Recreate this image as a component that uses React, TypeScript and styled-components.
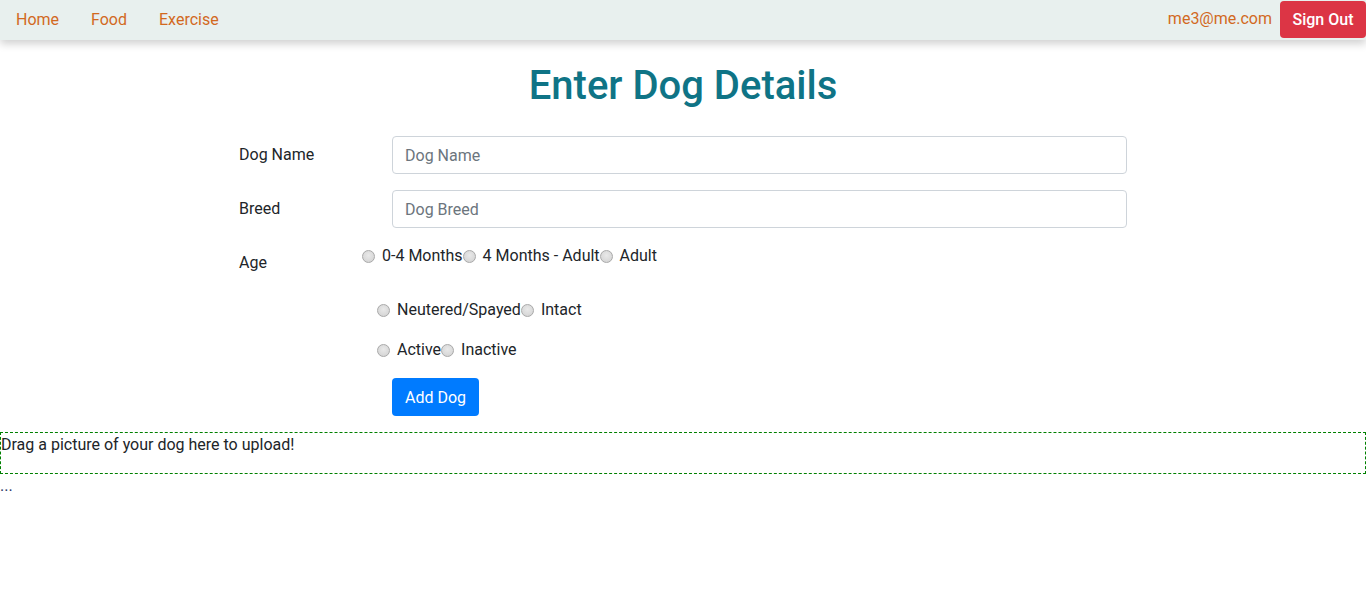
import React from "react";
import styled, { createGlobalStyle } from "styled-components";

const Global = createGlobalStyle`
  body {
    margin: 0;
    font-family: Roboto, "Liberation Sans", Arial, sans-serif;
    font-size: 16px;
    line-height: 1.5;
    color: #212529;
    background: #fff;
  }
  * { box-sizing: border-box; }
`;

const NavBar = styled.nav`
  height: 40px;
  background: #e8f0ee;
  box-shadow: 0 4px 8px rgba(0, 0, 0, 0.18);
  display: flex;
  align-items: center;
  justify-content: space-between;
  position: relative;
  z-index: 1;
`;

const NavLinks = styled.div`
  display: flex;
  align-items: center;
  padding-left: 16px;
  gap: 32px;
`;

const NavLink = styled.a`
  color: #d2691e;
  text-decoration: none;
  font-size: 16px;
`;

const NavRight = styled.div`
  display: flex;
  align-items: center;
  gap: 8px;
`;

const Email = styled.span`
  color: #d2691e;
  font-size: 16px;
  margin-top: -2px;
`;

const SignOut = styled.button`
  background: #dc3545;
  color: #fff;
  border: none;
  border-radius: 4px;
  height: 37px;
  width: 86px;
  font-family: inherit;
  font-size: 16px;
  font-weight: 500;
  margin-top: -1px;
  padding: 0;
`;

const Title = styled.h1`
  margin: 22px 0 26px;
  text-align: center;
  color: #0f7486;
  font-size: 40px;
  font-weight: 500;
  line-height: 1.2;
`;

const Form = styled.form`
  width: 889px;
  margin-left: 238px;
`;

const Row = styled.div`
  display: flex;
  margin-bottom: 16px;
`;

const Label = styled.label`
  width: 154px;
  flex-shrink: 0;
  padding-top: 7px;
  padding-bottom: 7px;
  font-size: 16px;
  line-height: 24px;
  padding-left: 1px;
`;

const Input = styled.input`
  flex: 1;
  height: 38px;
  border: 1px solid #ced4da;
  border-radius: 4px;
  padding: 6px 12px;
  font-family: inherit;
  font-size: 16px;
  color: #495057;
  &::placeholder { color: #6c757d; }
`;

const RadioGroup = styled.div<{ $indent: number }>`
  display: flex;
  align-items: center;
  margin-left: ${(p) => p.$indent}px;
  height: 24px;
  font-size: 16px;
`;

const RadioItem = styled.label`
  display: inline-flex;
  align-items: center;
`;

const RadioCircle = styled.span`
  width: 13px;
  height: 13px;
  border-radius: 50%;
  border: 1px solid #a9a9a9;
  background: radial-gradient(circle at 50% 40%, #e9e9e9, #d0d0d0);
  margin-right: 7px;
`;

const PlainRow = styled.div`
  margin-bottom: 16px;
`;

const AddButton = styled.button`
  margin-left: 154px;
  background: #007bff;
  color: #fff;
  border: none;
  border-radius: 4px;
  height: 38px;
  width: 87px;
  font-family: inherit;
  font-size: 16px;
  font-weight: 400;
  padding: 0;
`;

const DropZone = styled.div`
  border: 1px dashed #008000;
  height: 42px;
  font-size: 16px;
  line-height: 24px;
  margin-top: 16px;
  color: #212529;
`;

const Dots = styled.div`
  color: #2a3566;
  font-size: 16px;
  line-height: 24px;
`;

const Radio = ({ label }: { label: string }) => (
  <RadioItem>
    <RadioCircle />
    {label}
  </RadioItem>
);

export default function App() {
  return (
    <>
      <Global />
      <NavBar>
        <NavLinks>
          <NavLink href="#">Home</NavLink>
          <NavLink href="#">Food</NavLink>
          <NavLink href="#">Exercise</NavLink>
        </NavLinks>
        <NavRight>
          <Email>me3@me.com</Email>
          <SignOut>Sign Out</SignOut>
        </NavRight>
      </NavBar>
      <Title>Enter Dog Details</Title>
      <Form>
        <Row>
          <Label>Dog Name</Label>
          <Input placeholder="Dog Name" />
        </Row>
        <Row>
          <Label>Breed</Label>
          <Input placeholder="Dog Breed" />
        </Row>
        <Row>
          <Label>Age</Label>
          <RadioGroup $indent={-30}>
            <Radio label="0-4 Months" />
            <Radio label="4 Months - Adult" />
            <Radio label="Adult" />
          </RadioGroup>
        </Row>
        <PlainRow>
          <RadioGroup $indent={139}>
            <Radio label="Neutered/Spayed" />
            <Radio label="Intact" />
          </RadioGroup>
        </PlainRow>
        <PlainRow>
          <RadioGroup $indent={139}>
            <Radio label="Active" />
            <Radio label="Inactive" />
          </RadioGroup>
        </PlainRow>
        <AddButton type="button">Add Dog</AddButton>
      </Form>
      <DropZone>Drag a picture of your dog here to upload!</DropZone>
      <Dots>...</Dots>
    </>
  );
}
